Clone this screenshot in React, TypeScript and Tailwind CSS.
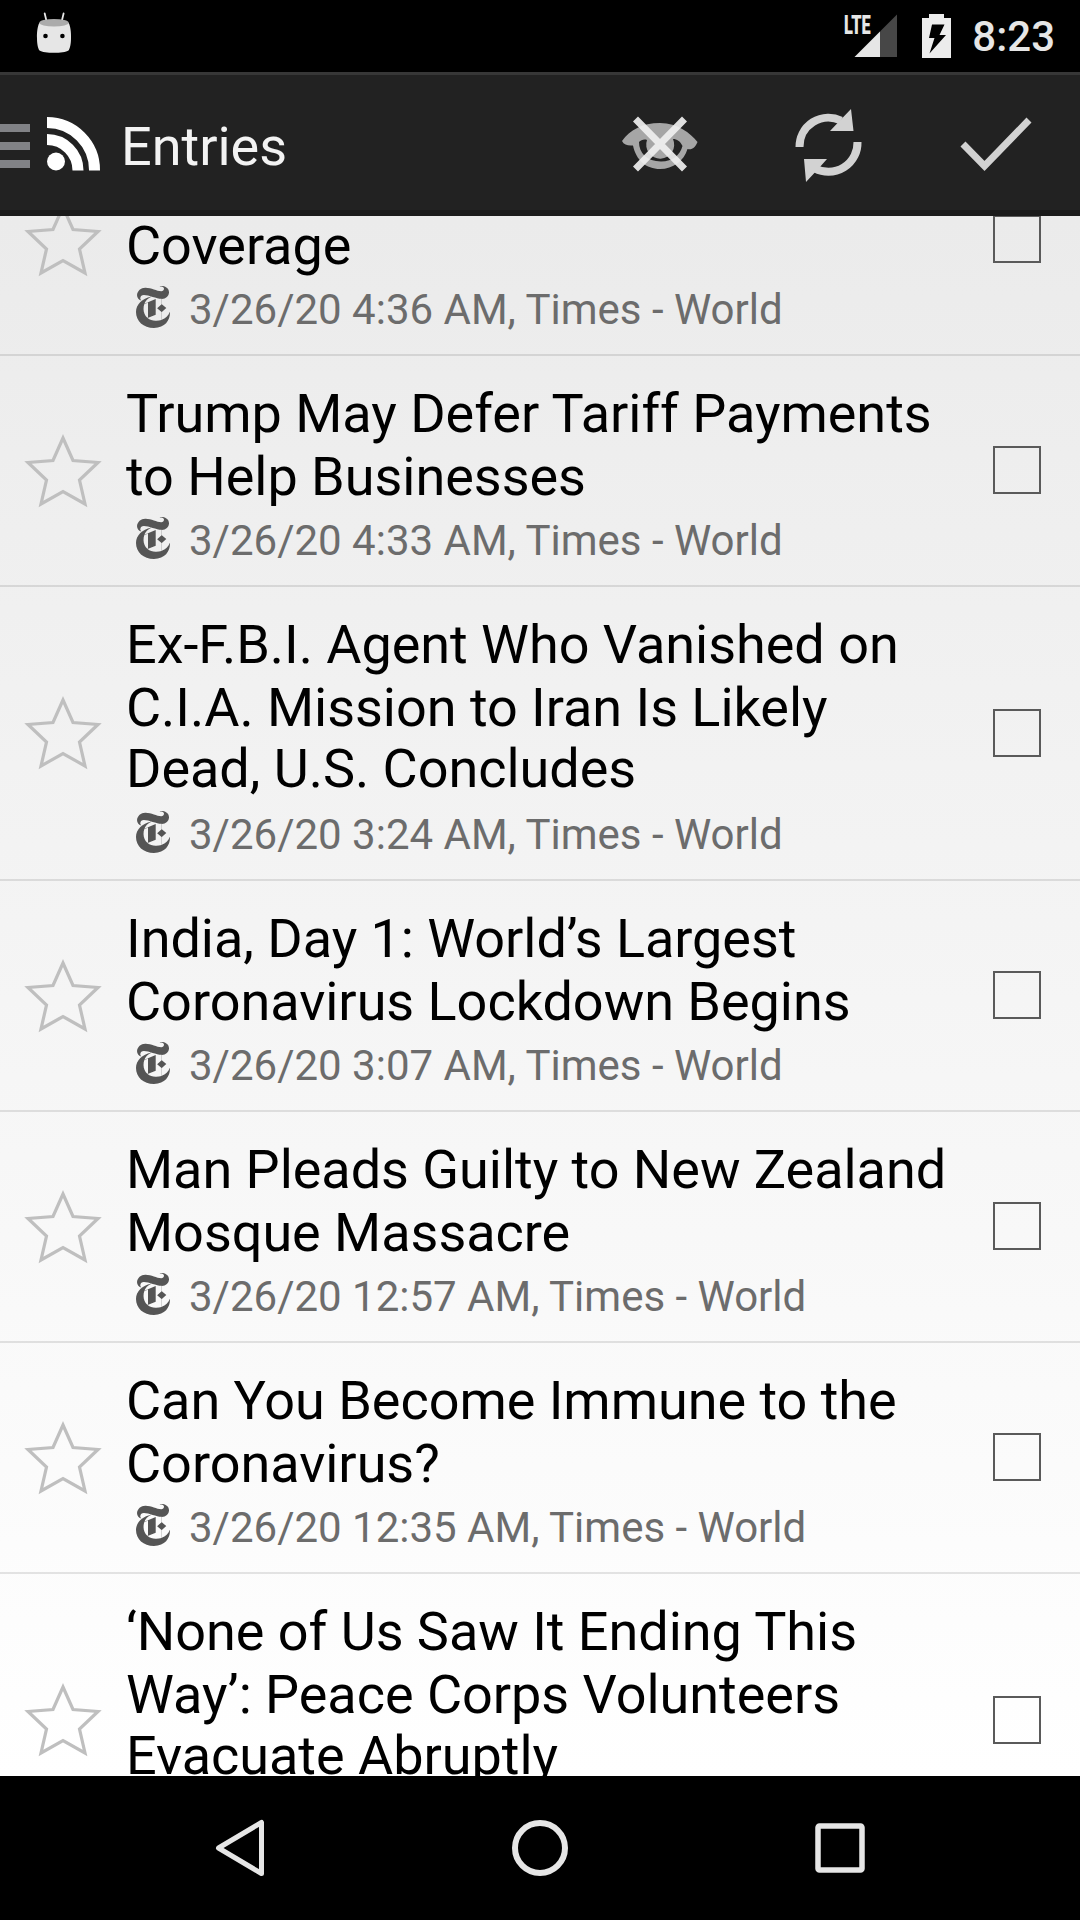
import { SiNewyorktimes } from "react-icons/si";

type Entry = { lines: string[]; meta: string };

const entries: Entry[] = [
  { lines: ["", "Coverage"], meta: "3/26/20 4:36 AM, Times - World" },
  { lines: ["Trump May Defer Tariff Payments", "to Help Businesses"], meta: "3/26/20 4:33 AM, Times - World" },
  { lines: ["Ex-F.B.I. Agent Who Vanished on", "C.I.A. Mission to Iran Is Likely", "Dead, U.S. Concludes"], meta: "3/26/20 3:24 AM, Times - World" },
  { lines: ["India, Day 1: World’s Largest", "Coronavirus Lockdown Begins"], meta: "3/26/20 3:07 AM, Times - World" },
  { lines: ["Man Pleads Guilty to New Zealand", "Mosque Massacre"], meta: "3/26/20 12:57 AM, Times - World" },
  { lines: ["Can You Become Immune to the", "Coronavirus?"], meta: "3/26/20 12:35 AM, Times - World" },
  { lines: ["‘None of Us Saw It Ending This", "Way’: Peace Corps Volunteers", "Evacuate Abruptly"], meta: "" },
];

function StatusBar() {
  return (
    <div className="flex h-[72px] shrink-0 items-start justify-between bg-black">
      <svg className="ml-9 mt-3 h-[42px] w-9" viewBox="36 12 36 42">
        <path d="M44.7 13.5 L46.5 21 M63.6 13.5 L61.8 21" stroke="#e6e6e6" strokeWidth="1.8" strokeLinecap="round" />
        <path d="M39.3 23 C44 20 64 20 68.7 23 C70.5 26 71.2 33 71 38 C71 44 70 48.5 68.5 50.5 C64 53.6 44 53.6 39.5 50.5 C38 48.5 37 44 37 38 C36.8 33 37.5 26 39.3 23Z" fill="#e6e6e6" />
        <ellipse cx="54" cy="22.7" rx="14.7" ry="3.8" fill="#ababab" />
        <circle cx="45.5" cy="36" r="2.3" />
        <circle cx="62.4" cy="36" r="2.3" />
      </svg>
      <div className="flex items-start">
        <div className="relative mt-3 h-[48px] w-[56px]">
          <span className="absolute left-[1px] top-[4px] origin-left scale-x-[0.63] text-[26px] font-black leading-[19px] text-[#e6e6e6]">LTE</span>
          <svg className="absolute left-0 top-0 h-[48px] w-[56px]" viewBox="844 12 56 48">
            <path d="M881 31.5 L898 14.5 V57 H881Z" fill="#474747" />
            <path d="M855.5 57 L881 31.5 V57Z" fill="#e6e6e6" />
          </svg>
        </div>
        <svg className="ml-[22px] mt-[14px] h-11 w-[30px]" viewBox="922 14 30 44">
          <path fillRule="evenodd" d="M930 14 H945 V18 H952 V58 H923 V18 H930Z M933 24.5 L930 38 H935.5 L930.5 53.5 L947 35 H940.5 L945.5 24.5Z" fill="#ececec" />
        </svg>
        <span className="ml-[21px] mr-[25px] mt-[13px] text-[42px] font-medium leading-[48px] text-[#e6e6e6]">8:23</span>
      </div>
    </div>
  );
}

function ActionBar() {
  return (
    <header className="flex h-[144px] shrink-0 items-center border-b-[6px] border-t-[3px] border-b-[#1a1a1a] border-t-[#373737] bg-[#222222]">
      <div className="mt-[7px] flex w-[30px] flex-col gap-[10px]">
        <span className="h-2 bg-[#818286]" />
        <span className="h-2 bg-[#818286]" />
        <span className="h-2 bg-[#818286]" />
      </div>
      <svg className="ml-[17px] mt-[3px] h-[54px] w-[54px]" viewBox="0 0 54 54" fill="none">
        <circle cx="9" cy="44.5" r="9" fill="white" />
        <path d="M0 22.5 A31 31 0 0 1 31 53.5 M0 5.5 A47.5 47.5 0 0 1 47.5 53.5" stroke="white" strokeWidth="11" />
      </svg>
      <h1 className="ml-[20px] mt-[8px] text-[54px] leading-[63px] text-[#f3f3f3]">Entries</h1>
      <div className="ml-auto mt-[3px] flex items-center">
        <svg className="h-[96px] w-[168px]" viewBox="576 96 168 96">
          <path fillRule="evenodd" d="M622 141 C630 130 642 123 660 123 C678 123 690 133 697.5 142 C695 148 692 150 687.5 149 C684 161 673 169 660 169 C646 169 636 160 633 145.500 C628 146 624 145 622 141Z M639 142 C639 153 647 161.500 661 161.500 C673 161.500 680 155 682.500 146 C680 141 677 139 673 139 A14 14 0 1 1 647 140 C644 139 641 140 639 142Z" fill="#a6a6a6" />
          <path d="M635.500 119 L684.500 169 M684.500 119 L635.500 169" stroke="#f0f0f0" strokeOpacity="0.92" strokeWidth="7" />
        </svg>
        <svg className="h-[96px] w-[168px]" viewBox="744 96 168 96">
          <path d="M799.500 147 A29 29 0 0 1 841 120.500 M857.500 142 A29 29 0 0 1 815 168.500" stroke="#d2d2d2" strokeWidth="8" fill="none" />
          <path d="M851 109 L853.500 131 H830 L839 121.500Z M804 159 H827 L819 168 L806 182Z" fill="#d2d2d2" />
        </svg>
        <svg className="h-[96px] w-[168px]" viewBox="912 96 168 96">
          <path d="M963 144 L984.500 166 L1029 120" stroke="#d2d2d2" strokeWidth="7" fill="none" />
        </svg>
      </div>
    </header>
  );
}

function EntryRow({ lines, meta }: Entry) {
  return (
    <li className="flex items-center border-b-2 border-black/10">
      <svg className="ml-[22px] h-[82px] w-[82px] shrink-0" viewBox="22 430 82 82">
        <path d="M63 438 L73 460.500 L98 462.500 L79.500 480 L85 504 L63 491.500 L41 504 L46.500 480 L28 462.500 L53 460.500Z" fill="none" stroke="#bfbfbf" strokeWidth="3.200" />
      </svg>
      <div className="ml-[22px] flex grow flex-col pb-[20px] pt-[26px]">
        <h2 className="text-[54px] leading-[63px] tracking-[-0.03px] text-black">
          {lines.map((line, i) => (
            <span key={line} className={i === 2 ? "-mt-[2px] mb-[2px] block h-[63px] whitespace-nowrap" : "block h-[63px] whitespace-nowrap"}>
              {line}
            </span>
          ))}
        </h2>
        <div className="mt-2 flex h-[49px] items-start">
          <SiNewyorktimes preserveAspectRatio="none" className="ml-[5px] mt-[1px] h-[42px] w-[44px] text-[#555555]" />
          <p className="ml-[14px] whitespace-nowrap text-[42px] leading-[49px] text-[#6c6c6c]">{meta}</p>
        </div>
      </div>
      <span role="checkbox" aria-checked="false" className="mb-px mr-[39px] size-12 shrink-0 border-2 border-[#5a5a5a]" />
    </li>
  );
}

function NavBar() {
  return (
    <nav className="flex h-[144px] shrink-0 items-center justify-center gap-[200px] bg-black">
      <svg className="h-[100px] w-[100px]" viewBox="190 1798 100 100" fill="none" stroke="#e6e6e6" strokeWidth="5">
        <path d="M261.500 1822.500 V1873.500 L218.500 1848Z" strokeLinejoin="round" />
      </svg>
      <svg className="h-[100px] w-[100px]" viewBox="490 1798 100 100" fill="none" stroke="#e6e6e6" strokeWidth="6">
        <circle cx="540" cy="1848" r="25" />
      </svg>
      <svg className="h-[100px] w-[100px]" viewBox="790 1798 100 100" fill="none" stroke="#e6e6e6" strokeWidth="5.500">
        <rect x="818" y="1826" width="44" height="44" rx="1.500" />
      </svg>
    </nav>
  );
}

export default function App() {
  return (
    <div className="flex h-[1920px] w-[1080px] flex-col overflow-hidden font-['Roboto',sans-serif]">
      <StatusBar />
      <ActionBar />
      <main className="h-[1560px] overflow-hidden bg-linear-to-b from-[#ebebeb] to-white">
        <ul className="-mt-[91px]">
          {entries.map((entry) => (
            <EntryRow key={entry.lines[1]} {...entry} />
          ))}
        </ul>
      </main>
      <NavBar />
    </div>
  );
}
